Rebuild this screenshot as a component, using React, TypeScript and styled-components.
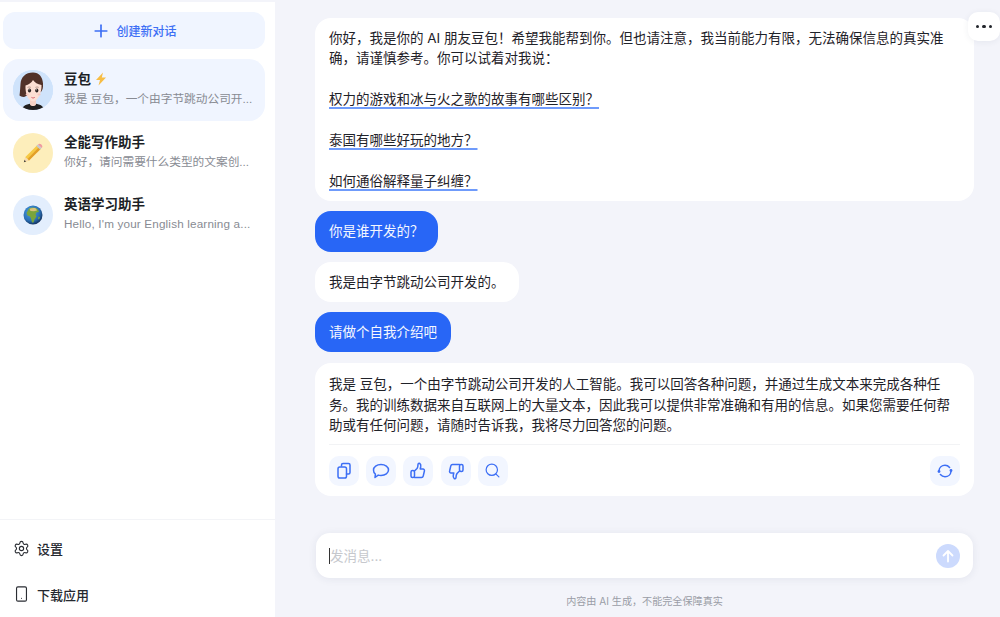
import React from 'react';
import styled, { createGlobalStyle } from 'styled-components';
import { Plus, Search, Settings, Smartphone } from 'lucide-react';

const FONT = `Inter, "Noto Sans CJK SC", "Noto Sans", sans-serif`;

const GlobalStyle = createGlobalStyle`
  * { box-sizing: border-box; }
  html, body { margin: 0; padding: 0; height: 100%; overflow: hidden; }
  body { font-family: ${FONT}; color: #1f2229; background: #f3f4fa; }
`;

const Page = styled.div`
  display: flex;
  height: 100vh;
  padding-top: 2px;
  background: #f3f4fa;
  position: relative;
`;

const Sidebar = styled.aside`
  display: flex;
  flex-direction: column;
  width: 275px;
  flex: none;
  background: #fff;
`;

const SideTop = styled.div`
  flex: 1;
  padding: 10px 10px 0 3px;
  display: flex;
  flex-direction: column;
`;

const NewChat = styled.button`
  display: flex;
  align-items: center;
  justify-content: center;
  gap: 5px;
  height: 37px;
  padding: 0;
  border: none;
  border-radius: 12px;
  background: #f0f5ff;
  color: #3d6ff5;
  font: 500 12px ${FONT};
  margin-bottom: 10px;
`;

const ChatItem = styled.div<{ $active?: boolean }>`
  display: flex;
  align-items: center;
  gap: 11px;
  height: 62px;
  padding: 0 10px;
  border-radius: 16px;
  background: ${(p) => (p.$active ? '#f0f5ff' : 'transparent')};
  margin-bottom: 0.5px;
`;

const Avatar = styled.div<{ $bg: string }>`
  width: 40px;
  height: 40px;
  flex: none;
  border-radius: 50%;
  overflow: hidden;
  background: ${(p) => p.$bg};
  display: flex;
  align-items: center;
  justify-content: center;
`;

const ChatText = styled.div`
  min-width: 0;
  flex: 1;
  padding-bottom: 3px;
`;

const ChatName = styled.div`
  display: flex;
  align-items: center;
  gap: 4px;
  font-size: 13.5px;
  font-weight: 700;
  line-height: 20px;
  color: #1c1f26;
`;

const ChatPreview = styled.div<{ $spacing?: number }>`
  margin-top: 1px;
  font-family: "Liberation Sans", "Noto Sans CJK SC", sans-serif;
  font-size: 11.7px;
  line-height: 18px;
  letter-spacing: ${(p) => p.$spacing ?? 0}px;
  color: #888b93;
  white-space: nowrap;
`;

const SideFooter = styled.div`
  border-top: 1px solid #f3f4f7;
  height: 98px;
  padding: 6px 13px 0;
  display: flex;
  flex-direction: column;
`;

const FooterRow = styled.div`
  display: flex;
  align-items: center;
  gap: 7px;
  height: 45.5px;
  font-size: 13px;
  font-weight: 500;
  color: #25282f;
`;

const FooterIcon = styled.span`
  width: 17px;
  display: flex;
  justify-content: center;
  color: #2a2d33;
`;

const Main = styled.main`
  flex: 1;
  min-width: 0;
  display: flex;
  flex-direction: column;
  padding: 16px 26px 0 40px;
`;

const Messages = styled.div`
  flex: 1;
  display: flex;
  flex-direction: column;
  align-items: flex-start;
  gap: 10px;
`;

const Bubble = styled.div<{ $user?: boolean; $wide?: boolean }>`
  padding: 10px 14px;
  font-size: 13.5px;
  line-height: 20.4px;
  border-radius: 16px;
  width: ${(p) => (p.$wide ? '100%' : 'auto')};
  background: ${(p) => (p.$user ? '#2866f6' : '#fff')};
  color: ${(p) => (p.$user ? '#f4f7ff' : '#1f2229')};
`;

const AnswerBubble = styled(Bubble)`
  margin-top: 1px;
  padding-top: 11px;
`;

const Paragraph = styled.p`
  margin: 0 0 20.4px;
  &:last-child { margin-bottom: 0; }
`;

const Question = styled.span`
  text-decoration: underline;
  text-decoration-color: #6f9bfb;
  text-decoration-thickness: 2px;
  text-underline-offset: 3px;
  text-decoration-skip-ink: none;
`;

const ActionBar = styled.div`
  display: flex;
  align-items: center;
  gap: 7.2px;
  margin-top: 8px;
  padding: 11px 0 0;
  border-top: 1px solid #f2f3f5;
`;

const ActionButton = styled.div<{ $end?: boolean }>`
  width: 30px;
  height: 30px;
  border-radius: 10px;
  background: #f2f6ff;
  color: #3d6ff5;
  display: flex;
  align-items: center;
  justify-content: center;
  margin-left: ${(p) => (p.$end ? 'auto' : '0')};
`;

const Composer = styled.div`
  flex: none;
  display: flex;
  flex-direction: column;
  align-items: center;
`;

const InputBox = styled.div`
  width: 657px;
  height: 45px;
  background: #fff;
  border-radius: 14px;
  box-shadow: 0 1px 8px rgba(40, 50, 90, 0.08);
  display: flex;
  align-items: center;
  padding: 0 13px;
`;

const Caret = styled.span`
  width: 1px;
  height: 16px;
  background: #333;
  flex: none;
`;

const Placeholder = styled.span`
  flex: 1;
  font-size: 13.5px;
  color: #c6c8cd;
  margin-bottom: 2px;
`;

const SendButton = styled.div`
  width: 24px;
  height: 24px;
  border-radius: 50%;
  background: #ccdafd;
  color: #fff;
  display: flex;
  align-items: center;
  justify-content: center;
`;

const Disclaimer = styled.div`
  font-size: 10.1px;
  line-height: 14px;
  color: #9a9da6;
  margin: 16px 0 9px;
`;

const MoreButton = styled.div`
  position: absolute;
  top: 12px;
  right: 0;
  width: 32px;
  height: 29px;
  background: #fff;
  border-radius: 10px;
  box-shadow: 0 1px 6px rgba(40, 50, 90, 0.07);
  display: flex;
  align-items: center;
  justify-content: center;
  gap: 3px;
`;

const Dot = styled.span`
  width: 3.4px;
  height: 3.4px;
  border-radius: 50%;
  background: #22252b;
`;

const GirlAvatar = () => (
  <svg width="40" height="40" viewBox="0 0 40 40">
    <rect width="40" height="40" fill="#cfe3fb" />
    <path d="M8 41c1-5 6-7.500 12-7.500s11 2.500 12 7.500z" fill="#201e1e" />
    <path d="M17 30h6v4.500c-1 2-5 2-6 0z" fill="#f7d2c5" />
    <path d="M20 2.500c-7.500 0-12 4.500-12.500 11.500-.3 4-.5 8-1 11.500 1.500 1.500 5 2 6.500 .5l15-4c1.500-2 2.300-4 2-8.500-.3-6.500-4-11-10-11z" fill="#513229" />
    <path d="M12.500 15.500c3-.8 6-2.500 7.500-5.500 1.800 2.500 4.500 4.300 8.500 5 .4 7.500-3.500 16-8.500 16.500-5-.5-8-8.500-7.500-16z" fill="#fcdfd3" />
    <ellipse cx="16.500" cy="20.500" rx="1.600" ry="2" fill="#2a2220" />
    <ellipse cx="23.800" cy="20.500" rx="1.600" ry="2" fill="#2a2220" />
    <circle cx="16" cy="19.800" r=".5" fill="#fff" />
    <circle cx="23.300" cy="19.800" r=".5" fill="#fff" />
    <path d="M14.500 17.400c1.100-.5 2.200-.5 3.300 0M22.400 17.400c1.100-.5 2.200-.5 3.300 0" stroke="#7a5548" strokeWidth=".5" fill="none" />
    <ellipse cx="14.200" cy="24.500" rx="1.600" ry="1" fill="#f8c9c0" />
    <ellipse cx="26" cy="24.500" rx="1.600" ry="1" fill="#f8c9c0" />
    <path d="M18.800 27.600c.8 .5 1.800 .5 2.600 0" stroke="#d8606a" strokeWidth="1" fill="none" strokeLinecap="round" />
  </svg>
);

const PencilIcon = () => (
  <svg width="20" height="20" viewBox="0 0 20 20">
    <path d="M0.800 19.200l1.600-5.200L14.200 2.200l3.600 3.600L6 17.600z" fill="#f6c945" />
    <path d="M4.500 16.100L16.100 4.100l1.700 1.700L6 17.600z" fill="#e29f2a" />
    <path d="M0.800 19.200l1.600-5.200 3.600 3.600z" fill="#f5dcb5" />
    <path d="M0.800 19.200l.7-2.300 1.600 1.600z" fill="#3a3a3a" />
    <path d="M13.400 3l1.500-1.500 3.600 3.600-1.500 1.500z" fill="#c4c9cf" />
    <path d="M15 1.400c1-1 2.300-1 3.100-.1l.6 .6c.9 .9 .9 2.200 0 3.100z" fill="#ef9aa0" />
  </svg>
);

const GlobeIcon = () => (
  <svg width="20" height="20" viewBox="0 0 20 20">
    <defs>
      <radialGradient id="ocean" cx="40%" cy="35%" r="70%">
        <stop offset="0%" stopColor="#4aa0e6" />
        <stop offset="65%" stopColor="#2a6fb5" />
        <stop offset="100%" stopColor="#10294f" />
      </radialGradient>
    </defs>
    <circle cx="10" cy="10" r="9.500" fill="url(#ocean)" />
    <path d="M6 3.500c2-1 5-1.500 7 -.5l2 1.500 1 2.500-2.500 .5-1 2 1 2-2 3-1 3-1.500 0-1-4-1-2-2.500-1-1-2.500z" fill="#7aa53c" />
    <path d="M6.500 3.800c2-.8 4.500-1 6.500-.3l1 2-3 .8-3.500-.3z" fill="#d9c27a" />
    <path d="M15.500 11.500l1.500 .5-.8 2.500-1.200-.5z" fill="#7aa53c" />
  </svg>
);

const BoltIcon = () => (
  <svg width="12" height="14" viewBox="0 0 12 14">
    <path d="M8 0.500L1 8h4L3.500 13.500 11 5.500H6.800z" fill="#f7bd45" />
  </svg>
);

const iconProps = {
  width: 18,
  height: 18,
  viewBox: '0 0 18 18',
  fill: 'none',
  stroke: 'currentColor',
  strokeWidth: 1.5,
  strokeLinecap: 'round' as const,
  strokeLinejoin: 'round' as const,
};

const CopyIcon = () => (
  <svg {...iconProps}>
    <rect x="3" y="5" width="8.500" height="11" rx="1.800" />
    <path d="M6.500 4V3A1.500 1.500 0 0 1 8 1.500h5.500A1.500 1.500 0 0 1 15 3v7.500a1.500 1.500 0 0 1-1.500 1.500h-2" />
  </svg>
);

const CommentIcon = () => (
  <svg {...iconProps}>
    <path d="M9 2.500c4.300 0 7.500 2.400 7.500 5.500s-3.200 5.500-7.500 5.500c-1 0-2-.1-2.800-.4L3 15.500l.4-3.300C2 11.200 1.500 9.700 1.500 8 1.500 4.900 4.700 2.500 9 2.500z" />
  </svg>
);

const ThumbPaths = () => (
  <>
    <rect x="2" y="8.500" width="3.500" height="7" rx="1.500" />
    <path d="M5.500 9L8 6.500C9 5 9 3.500 9 2.500c0-1 1-1.500 1.800-1 1 .6 1.200 2 .9 3.500L11.200 7H14c1 0 1.700 1 1.400 2l-1.200 5.200c-.2 .8-.9 1.300-1.700 1.300H5.500" />
  </>
);

const ThumbUpIcon = () => (
  <svg {...iconProps}>
    <ThumbPaths />
  </svg>
);

const ThumbDownIcon = () => (
  <svg {...iconProps}>
    <g transform="rotate(180 9 9)">
      <ThumbPaths />
    </g>
  </svg>
);

const RefreshIcon = () => (
  <svg width="16" height="16" viewBox="0 0 16 16" fill="none" stroke="currentColor" strokeWidth="1.500" strokeLinecap="round">
    <path d="M2 7.500C2.300 4.500 4.800 2.300 8 2.300c1.900 0 3.500 .9 4.600 2.200" />
    <path d="M14 8.500c-.3 3-2.800 5.200-6 5.200-1.900 0-3.500-.9-4.600-2.200" />
    <circle cx="14" cy="7.500" r="1.400" fill="currentColor" stroke="none" />
    <circle cx="2" cy="8.500" r="1.400" fill="currentColor" stroke="none" />
  </svg>
);

const SendArrow = () => (
  <svg width="14" height="14" viewBox="0 0 14 14" fill="none" stroke="currentColor" strokeWidth="1.800" strokeLinecap="round" strokeLinejoin="round">
    <path d="M7 12.500V2M2.500 6.500L7 2l4.500 4.500" />
  </svg>
);

const chats = [
  { name: '豆包', bolt: true, bg: '#cfe3fb', icon: <GirlAvatar />, preview: '我是 豆包，一个由字节跳动公司开...' },
  { name: '全能写作助手', bg: '#fdeebb', icon: <PencilIcon />, preview: '你好，请问需要什么类型的文案创...' },
  { name: '英语学习助手', bg: '#e3eefd', icon: <GlobeIcon />, preview: "Hello, I'm your English learning a...", spacing: 0.17 },
];

const questions = ['权力的游戏和冰与火之歌的故事有哪些区别？', '泰国有哪些好玩的地方？', '如何通俗解释量子纠缠？'];

export default function App() {
  return (
    <>
      <GlobalStyle />
      <Page>
        <Sidebar>
          <SideTop>
            <NewChat>
              <Plus size={20} strokeWidth={2} />
              创建新对话
            </NewChat>
            {chats.map((chat, i) => (
              <ChatItem key={chat.name} $active={i === 0}>
                <Avatar $bg={chat.bg}>{chat.icon}</Avatar>
                <ChatText>
                  <ChatName>
                    {chat.name}
                    {chat.bolt && <BoltIcon />}
                  </ChatName>
                  <ChatPreview $spacing={chat.spacing}>{chat.preview}</ChatPreview>
                </ChatText>
              </ChatItem>
            ))}
          </SideTop>
          <SideFooter>
            <FooterRow>
              <FooterIcon><Settings size={17} strokeWidth={1.6} /></FooterIcon>
              设置
            </FooterRow>
            <FooterRow>
              <FooterIcon><Smartphone size={18} strokeWidth={1.6} /></FooterIcon>
              下载应用
            </FooterRow>
          </SideFooter>
        </Sidebar>
        <Main>
          <Messages>
            <Bubble $wide>
              <Paragraph>你好，我是你的 AI 朋友豆包！希望我能帮到你。但也请注意，我当前能力有限，无法确保信息的真实准确，请谨慎参考。你可以试着对我说：</Paragraph>
              {questions.map((q) => (
                <Paragraph key={q}>
                  <Question>{q}</Question>
                </Paragraph>
              ))}
            </Bubble>
            <Bubble $user>你是谁开发的？</Bubble>
            <Bubble>我是由字节跳动公司开发的。</Bubble>
            <Bubble $user>请做个自我介绍吧</Bubble>
            <AnswerBubble $wide>
              我是 豆包，一个由字节跳动公司开发的人工智能。我可以回答各种问题，并通过生成文本来完成各种任务。我的训练数据来自互联网上的大量文本，因此我可以提供非常准确和有用的信息。如果您需要任何帮助或有任何问题，请随时告诉我，我将尽力回答您的问题。
              <ActionBar>
                <ActionButton><CopyIcon /></ActionButton>
                <ActionButton><CommentIcon /></ActionButton>
                <ActionButton><ThumbUpIcon /></ActionButton>
                <ActionButton><ThumbDownIcon /></ActionButton>
                <ActionButton><Search size={17} strokeWidth={1.7} /></ActionButton>
                <ActionButton $end><RefreshIcon /></ActionButton>
              </ActionBar>
            </AnswerBubble>
          </Messages>
          <Composer>
            <InputBox>
              <Caret />
              <Placeholder>发消息...</Placeholder>
              <SendButton><SendArrow /></SendButton>
            </InputBox>
            <Disclaimer>内容由 AI 生成，不能完全保障真实</Disclaimer>
          </Composer>
        </Main>
        <MoreButton><Dot /><Dot /><Dot /></MoreButton>
      </Page>
    </>
  );
}
